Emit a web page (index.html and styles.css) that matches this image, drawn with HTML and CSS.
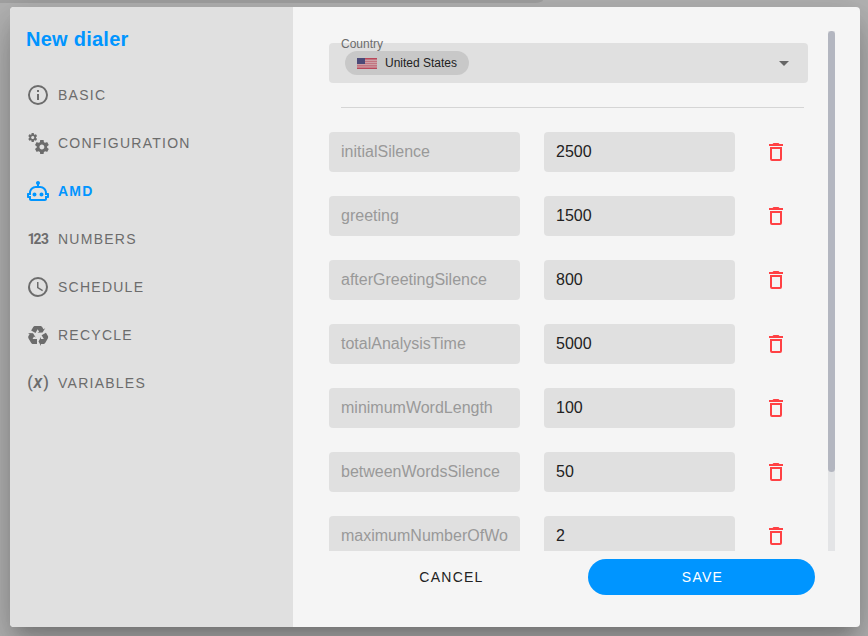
FILE: index.html
```html
<!DOCTYPE html>
<html lang="en">
<head>
<meta charset="utf-8">
<title>New dialer</title>
<link rel="stylesheet" href="styles.css">
</head>
<body>
<svg class="defs" aria-hidden="true">
  <symbol id="trash" viewBox="0 0 24 24"><path d="M6,19A2,2 0 0,0 8,21H16A2,2 0 0,0 18,19V7H6V19M8,9H16V19H8V9M15.5,4L14.5,3H9.5L8.5,4H5V6H19V4H15.5Z"/></symbol>
</svg>
<div class="strip"></div>
<main class="dialog">
  <aside class="sidebar">
    <h1 class="title">New dialer</h1>
    <nav class="menu">
      <a class="item"><svg class="icon" viewBox="0 0 24 24"><path d="M11,9H13V7H11M12,20C7.59,20 4,16.41 4,12C4,7.59 7.59,4 12,4C16.41,4 20,7.59 20,12C20,16.41 16.41,20 12,20M12,2A10,10 0 0,0 2,12A10,10 0 0,0 12,22A10,10 0 0,0 22,12A10,10 0 0,0 12,2M11,17H13V11H11V17Z"/></svg><span>BASIC</span></a>
      <a class="item"><svg class="icon" viewBox="0 0 24 24"><path d="M15.9,18.45C17.25,18.45 18.35,17.35 18.35,16C18.35,14.65 17.25,13.55 15.9,13.55C14.54,13.55 13.45,14.65 13.45,16C13.45,17.35 14.54,18.45 15.9,18.45M21.1,16.68L22.58,17.84C22.71,17.95 22.75,18.13 22.66,18.29L21.26,20.71C21.17,20.86 21,20.92 20.83,20.86L19.09,20.16C18.73,20.44 18.33,20.67 17.91,20.85L17.64,22.7C17.62,22.87 17.47,23 17.3,23H14.5C14.32,23 14.18,22.87 14.15,22.7L13.89,20.85C13.46,20.67 13.07,20.44 12.71,20.16L10.96,20.86C10.81,20.92 10.62,20.86 10.54,20.71L9.14,18.29C9.05,18.13 9.09,17.95 9.22,17.84L10.7,16.68L10.65,16L10.7,15.31L9.22,14.16C9.09,14.05 9.05,13.86 9.14,13.71L10.54,11.29C10.62,11.13 10.81,11.07 10.96,11.13L12.71,11.84C13.07,11.56 13.46,11.32 13.89,11.15L14.15,9.29C14.18,9.13 14.32,9 14.5,9H17.3C17.47,9 17.62,9.13 17.64,9.29L17.91,11.15C18.33,11.32 18.73,11.56 19.09,11.84L20.83,11.13C21,11.07 21.17,11.13 21.26,11.29L22.66,13.71C22.75,13.86 22.71,14.05 22.58,14.16L21.1,15.31L21.15,16L21.1,16.68M6.69,8.07C7.56,8.07 8.26,7.37 8.26,6.5C8.26,5.63 7.56,4.92 6.69,4.92A1.58,1.58 0 0,0 5.11,6.5C5.11,7.37 5.82,8.07 6.69,8.07M10.03,6.94L11,7.68C11.07,7.75 11.09,7.87 11.03,7.97L10.13,9.53C10.08,9.63 9.96,9.67 9.86,9.63L8.74,9.18L8,9.62L7.81,10.81C7.79,10.92 7.7,11 7.59,11H5.79C5.67,11 5.58,10.92 5.56,10.81L5.4,9.62L4.64,9.18L3.52,9.63C3.41,9.67 3.3,9.63 3.24,9.53L2.34,7.97C2.28,7.87 2.31,7.75 2.39,7.68L3.34,6.94L3.31,6.5L3.34,6.06L2.39,5.32C2.31,5.25 2.28,5.13 2.34,5.03L3.24,3.47C3.3,3.37 3.41,3.33 3.52,3.37L4.63,3.82L5.4,3.38L5.56,2.19C5.58,2.08 5.67,2 5.79,2H7.59C7.7,2 7.79,2.08 7.81,2.19L8,3.38L8.74,3.82L9.86,3.37C9.96,3.33 10.08,3.37 10.13,3.47L11.03,5.03C11.09,5.13 11.07,5.25 11,5.32L10.03,6.06L10.06,6.5L10.03,6.94Z"/></svg><span>CONFIGURATION</span></a>
      <a class="item active"><svg class="icon" viewBox="0 0 24 24"><path d="M17.5 15.5C17.5 16.61 16.61 17.5 15.5 17.5S13.5 16.61 13.5 15.5 14.4 13.5 15.5 13.5 17.5 14.4 17.5 15.5M8.5 13.5C7.4 13.5 6.5 14.4 6.5 15.5S7.4 17.5 8.5 17.5 10.5 16.61 10.5 15.5 9.61 13.5 8.5 13.5M23 15V18C23 18.55 22.55 19 22 19H21V20C21 21.11 20.11 22 19 22H5C3.9 22 3 21.11 3 20V19H2C1.45 19 1 18.55 1 18V15C1 14.45 1.45 14 2 14H3C3 10.13 6.13 7 10 7H11V5.73C10.4 5.39 10 4.74 10 4C10 2.9 10.9 2 12 2S14 2.9 14 4C14 4.74 13.6 5.39 13 5.73V7H14C17.87 7 21 10.13 21 14H22C22.55 14 23 14.45 23 15M21 16H19V14C19 11.24 16.76 9 14 9H10C7.24 9 5 11.24 5 14V16H3V17H5V20H19V17H21V16Z"/></svg><span>AMD</span></a>
      <a class="item"><svg class="icon" viewBox="0 0 24 24"><text class="digits" x="1.4 7.5 15" y="17">123</text></svg><span>NUMBERS</span></a>
      <a class="item"><svg class="icon" viewBox="0 0 24 24"><path d="M12,20A8,8 0 0,0 20,12A8,8 0 0,0 12,4A8,8 0 0,0 4,12A8,8 0 0,0 12,20M12,2A10,10 0 0,1 22,12A10,10 0 0,1 12,22C6.47,22 2,17.5 2,12A10,10 0 0,1 12,2M12.5,7V12.25L17,14.92L16.25,16.15L11,13V7H12.5Z"/></svg><span>SCHEDULE</span></a>
      <a class="item"><svg class="icon" viewBox="0 0 24 24"><path d="M21.82,15.42L19.32,19.75C18.83,20.61 17.92,21.06 17,21H15V23L12.5,18.5L15,14V16H17.82L15.6,12.15L19.93,9.65L21.73,12.77C22.25,13.54 22.32,14.57 21.82,15.42M9.21,3.06H14.21C15.19,3.06 16.04,3.63 16.45,4.45L17.45,6.19L19.18,5.19L16.54,9.6L11.39,9.69L13.12,8.69L11.71,6.24L9.5,10.09L5.16,7.59L6.96,4.47C7.37,3.64 8.22,3.06 9.21,3.06M5.05,19.76L2.55,15.43C2.06,14.58 2.13,13.56 2.64,12.79L3.64,11.06L1.91,10.06L7.05,10.14L9.7,14.56L7.97,13.56L6.56,16H11V21H7.4C6.47,21.07 5.55,20.61 5.05,19.76Z"/></svg><span>RECYCLE</span></a>
      <a class="item"><svg class="icon" viewBox="0 0 24 24"><text class="paren" x="1.2" y="17">(</text><text class="var" x="7.4" y="17">x</text><text class="paren" x="17.2" y="17">)</text></svg><span>VARIABLES</span></a>
    </nav>
  </aside>
  <section class="content">
    <div class="scroller">
      <div class="form">
        <div class="select">
          <label class="label">Country</label>
          <div class="chip">
            <svg class="flag" viewBox="0 0 20 11"><path fill="#c27580" d="M0 0h20v11H0z"/><path fill="#b9475a" d="M0 0h20v1H0zM0 10h20v1H0z"/><path fill="#cda0a6" d="M8 2h12v1H8zM8 4h12v1H8zM0 6h20v1H0zM0 8.6h20v.7H0z"/><path fill="#4b4a78" d="M0 0h8v6H0z"/></svg>
            <span>United States</span>
          </div>
          <svg class="caret" viewBox="0 0 24 24"><path d="M7,10L12,15L17,10H7Z"/></svg>
        </div>
        <hr class="rule">
        <div class="rows">
          <div class="row"><div class="field name">initialSilence</div><div class="field">2500</div><svg class="trash"><use href="#trash"/></svg></div>
          <div class="row"><div class="field name">greeting</div><div class="field">1500</div><svg class="trash"><use href="#trash"/></svg></div>
          <div class="row"><div class="field name">afterGreetingSilence</div><div class="field">800</div><svg class="trash"><use href="#trash"/></svg></div>
          <div class="row"><div class="field name">totalAnalysisTime</div><div class="field">5000</div><svg class="trash"><use href="#trash"/></svg></div>
          <div class="row"><div class="field name">minimumWordLength</div><div class="field">100</div><svg class="trash"><use href="#trash"/></svg></div>
          <div class="row"><div class="field name">betweenWordsSilence</div><div class="field">50</div><svg class="trash"><use href="#trash"/></svg></div>
          <div class="row"><div class="field name">maximumNumberOfWo</div><div class="field">2</div><svg class="trash"><use href="#trash"/></svg></div>
        </div>
      </div>
      <div class="track"><div class="thumb"></div></div>
    </div>
    <div class="actions">
      <button class="btn">CANCEL</button>
      <button class="btn save">SAVE</button>
    </div>
  </section>
</main>
</body>
</html>
```
FILE: styles.css
```css
* { box-sizing: border-box; }
body {
  margin: 0;
  height: 636px;
  overflow: hidden;
  background: #b4b4b4;
  font-family: "Liberation Sans", Arial, sans-serif;
}
.defs { display: none; }
.strip { width: 543px; height: 3px; background: #a3a3a3; border-bottom-right-radius: 8px 3px; }
.dialog {
  display: flex;
  width: 850px;
  height: 620px;
  margin: 4px 0 0 10px;
  border-radius: 4px;
  overflow: hidden;
  background: #f5f5f5;
  box-shadow: 0 11px 15px -7px rgba(0,0,0,.2), 0 24px 38px 3px rgba(0,0,0,.14), 0 9px 46px 8px rgba(0,0,0,.12);
}
.sidebar { width: 283px; padding: 16px; background: #e0e0e0; }
.title { margin: 0; font-size: 20px; line-height: 32px; letter-spacing: .25px; color: #0095ff; }
.menu { margin-top: 16px; }
.item { display: flex; align-items: center; gap: 8px; height: 48px; font-size: 14px; letter-spacing: 1.25px; color: #6c6c6c; }
.active { color: #0095ff; font-weight: bold; }
.icon { width: 24px; height: 24px; flex: none; fill: currentColor; }
.digits { font: bold 13.8px Roboto, sans-serif; letter-spacing: 0; }
.var { font: italic 500 18px Roboto, sans-serif; letter-spacing: 0; }
.paren { font: 500 16px Roboto, sans-serif; letter-spacing: 0; }
.content { flex: 1; padding: 24px 25px 32px 24px; }
.scroller { display: flex; height: 520px; overflow: hidden; }
.form { width: 511px; padding: 12px 20px 0 12px; }
.select { position: relative; display: flex; align-items: center; width: 479px; height: 40px; padding: 0 12px 0 16px; border-radius: 4px; background: #e0e0e0; }
.label { position: absolute; left: 12px; top: -7px; font-size: 12px; line-height: 16px; color: #6c6c6c; }
.chip { display: flex; align-items: center; gap: 8px; height: 24px; width: 124px; padding: 0 12px; border-radius: 12px; background: #c8c8c8; font-size: 12px; color: #222; white-space: nowrap; }
.flag { width: 20px; height: 11px; flex: none; }
.caret { width: 24px; height: 24px; margin-left: auto; fill: #666; }
.rule { width: 463px; height: 1px; margin: 24px 0 24px 12px; border: 0; background: #d5d5d5; }
.row { display: flex; align-items: center; height: 40px; margin-bottom: 24px; }
.field { width: 191px; height: 40px; margin-right: 24px; padding: 0 12px; border-radius: 4px; background: #e0e0e0; font-size: 16px; line-height: 39px; color: #222; white-space: nowrap; overflow: hidden; }
.name { color: #999; }
.trash { width: 24px; height: 24px; margin-left: 5px; fill: #ff4144; }
.track { width: 7px; background: #e3e4e6; }
.thumb { height: 441px; border-radius: 4px; background: #b3b6c0; }
.actions { display: flex; padding: 8px 0 0 20px; }
.btn { width: 227px; height: 36px; padding: 0 0 0 2px; border: 0; border-radius: 18px; background: none; font: 500 14px "Liberation Sans", Arial, sans-serif; letter-spacing: 1.25px; color: #222; }
.save { margin-left: 24px; background: #0095ff; color: #fff; }
```
